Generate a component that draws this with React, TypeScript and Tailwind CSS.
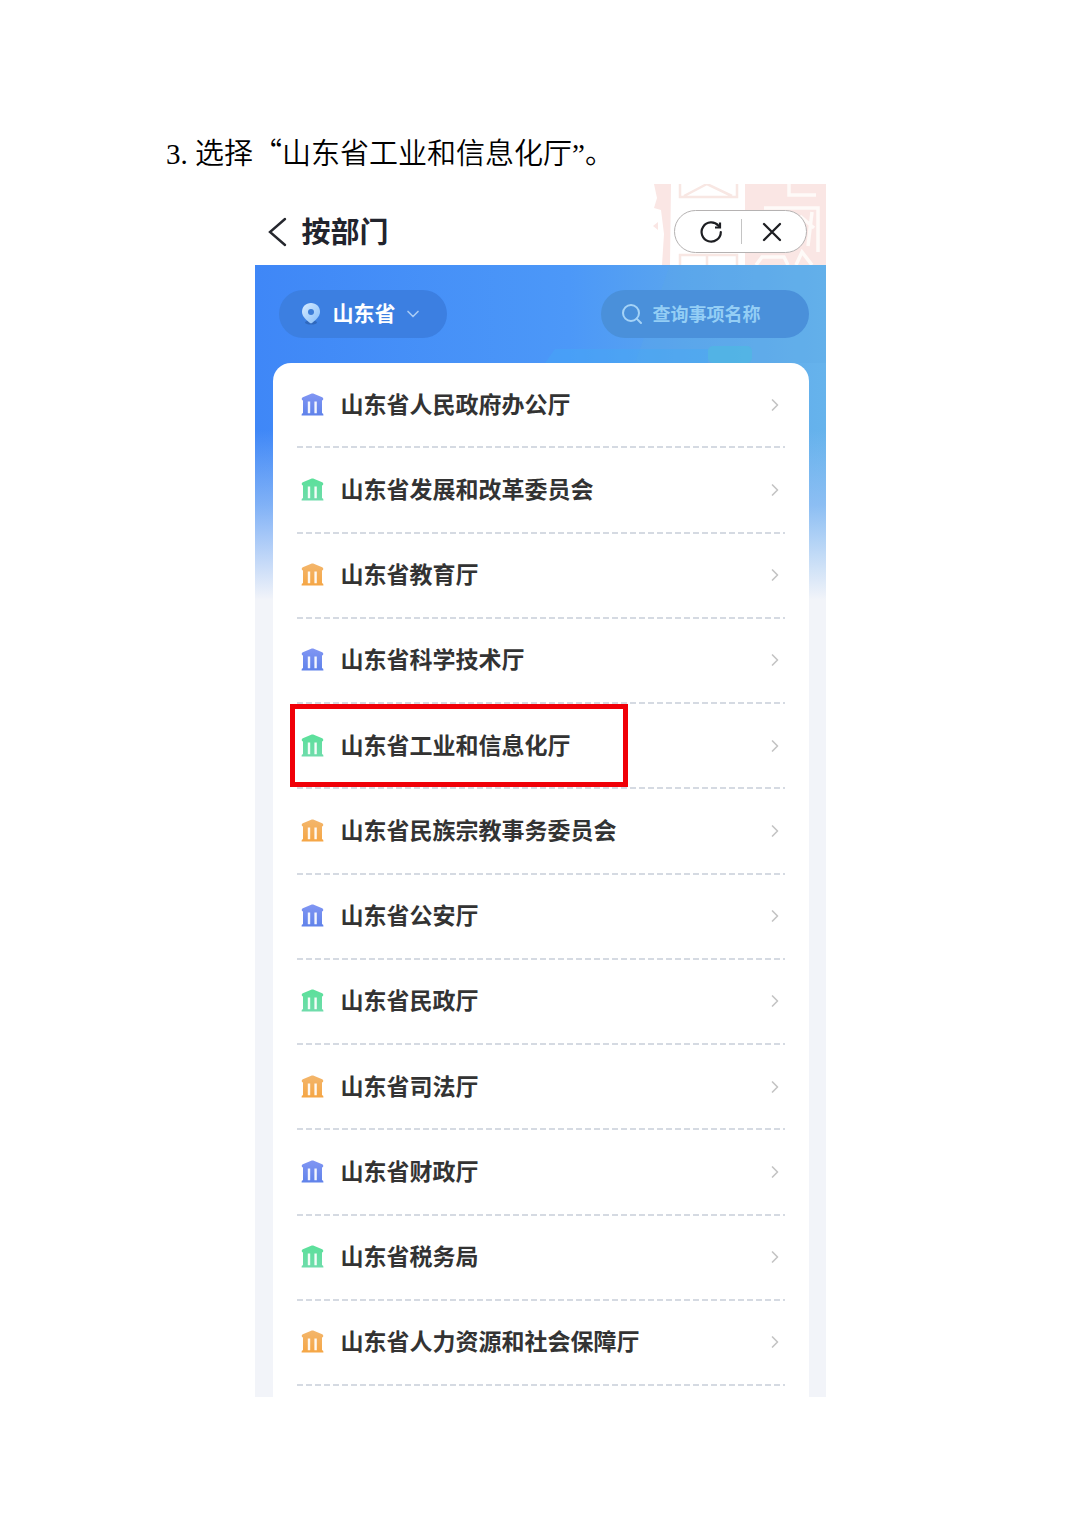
import { ChevronDown, ChevronRight, Search } from "lucide-react";

type Tone = "blue" | "green" | "orange";

const tones: Record<Tone, { from: string; to: string }> = {
  blue: { from: "#8196f3", to: "#5f82ea" },
  green: { from: "#5be09a", to: "#6fdcab" },
  orange: { from: "#f3b66c", to: "#f5a645" },
};

const toneOrder: Tone[] = ["blue", "green", "orange"];

const departments = [
  { id: "office", name: "山东省人民政府办公厅" },
  { id: "reform", name: "山东省发展和改革委员会" },
  { id: "education", name: "山东省教育厅" },
  { id: "science", name: "山东省科学技术厅" },
  { id: "industry", name: "山东省工业和信息化厅", marked: true },
  { id: "ethnic", name: "山东省民族宗教事务委员会" },
  { id: "police", name: "山东省公安厅" },
  { id: "civil", name: "山东省民政厅" },
  { id: "justice", name: "山东省司法厅" },
  { id: "finance", name: "山东省财政厅" },
  { id: "tax", name: "山东省税务局" },
  { id: "hr", name: "山东省人力资源和社会保障厅" },
];

function HallIcon({ tone }: { tone: Tone }) {
  const { from, to } = tones[tone];
  return (
    <svg viewBox="0 0 24 24" className="h-6 w-6 shrink-0" aria-hidden="true">
      <defs>
        <linearGradient id={`hall-${tone}`} x1="0" y1="0" x2="0" y2="1">
          <stop offset="0" stopColor={from} />
          <stop offset="1" stopColor={to} />
        </linearGradient>
      </defs>
      <path
        fill={`url(#hall-${tone})`}
        d="M10.800 .6Q11.500 .2 12.200 .6L21.200 4.200Q22.300 4.800 22.300 6Q22.300 7.400 21 7.500V20.300H21.400Q22.400 20.500 22.400 22V22.600H.6V22Q.6 20.500 1.600 20.300H2V7.500Q.7 7.400 .7 6Q.7 4.800 1.800 4.200Z"
      />
      <path fill="#fff" fillOpacity=".92" d="M6.800 8.500H9.200V20.300H6.800ZM13.400 8.500H15.800V20.300H13.400Z" />
    </svg>
  );
}

function PinIcon() {
  return (
    <svg viewBox="0 0 20 24" className="h-6 w-5 shrink-0" aria-hidden="true">
      <defs>
        <linearGradient id="pin" x1="0" y1="0" x2="1" y2="1">
          <stop offset="0" stopColor="#d9ecff" />
          <stop offset="1" stopColor="#84bdfa" />
        </linearGradient>
      </defs>
      <ellipse cx="10" cy="20.5" rx="6" ry="2" fill="#2f68bd" />
      <path fill="url(#pin)" d="M10 1C15.2 1 19 4.900 19 9.700C19 14.500 14.500 18.500 10 21.500C5.500 18.500 1 14.500 1 9.700C1 4.900 4.800 1 10 1Z" />
      <circle cx="10" cy="10" r="3" fill="#3c7dd8" />
    </svg>
  );
}

// Faded seal pattern behind the top right of the title bar
function SealPattern() {
  return (
    <svg viewBox="0 0 176 81" className="absolute top-0 right-0 h-[81px] w-[176px]" aria-hidden="true">
      <g fill="#fae6e4">
        <path d="M4 0H21L20 81H12L14 50L11 26L4 24L7 14Z" />
        <path d="M95 0H176V81H95Z" />
        <path d="M3 42L8 38V46Z" />
      </g>
      <g fill="none" stroke="#f8e7e3" strokeWidth="2.500">
        <path d="M30 0V13H87V0M34 12L57 0L82 12M30 81V71H87V81M57 71V81" />
      </g>
      <g fill="none" stroke="#fefaf8" strokeWidth="3.500">
        <path d="M139 0V11H166M114 24H168V68M150 32L164 44M162 28L158 62" />
        <path d="M106 81L112 73H134L138 81M146 81L152 68L162 81" />
      </g>
    </svg>
  );
}

function TitleBar() {
  return (
    <header className="relative flex items-center justify-between pt-[26px] pr-[19px] pb-3 pl-3">
      <SealPattern />
      <div className="flex items-center gap-[13px]">
        <button type="button" aria-label="返回">
          <svg viewBox="0 0 22 30" className="h-[30px] w-[22px]" fill="none" stroke="#25272e" strokeWidth="2.400" strokeLinecap="round">
            <path d="M18 2L3 15L18 28" />
          </svg>
        </button>
        <h1 className="pb-0.5 text-[29px] leading-[41px] font-bold text-[#22242d]">按部门</h1>
      </div>
      <div className="relative flex h-[43px] w-[133px] items-center rounded-full border border-[#b5b2b2] bg-white">
        <button type="button" aria-label="刷新" className="flex flex-1 justify-center pl-1.5">
          <svg viewBox="0 0 24 24" className="h-6 w-6" fill="none" stroke="#1d1e22" strokeWidth="2.200">
            <path d="M21.800 12A9.600 9.600 0 1 1 19.500 5.800" strokeLinecap="round" />
            <path d="M21 2.500V7.500H16" />
          </svg>
        </button>
        <span className="h-[25px] w-px bg-[#c4c4c4]" />
        <button type="button" aria-label="关闭" className="flex flex-1 justify-center pr-1">
          <svg viewBox="0 0 20 20" className="h-5 w-5" fill="none" stroke="#1d1e22" strokeWidth="2.300" strokeLinecap="round">
            <path d="M2 2L18 18M18 2L2 18" />
          </svg>
        </button>
      </div>
    </header>
  );
}

function FilterBar() {
  return (
    <div className="relative flex items-center justify-between pr-[17px] pl-6">
      <label className="flex h-12 w-[168px] items-center rounded-full bg-[#3c7fe1] pl-[22px]">
        <PinIcon />
        <select
          aria-label="地区"
          defaultValue="山东省"
          className="ml-3 w-[67px] appearance-none bg-transparent pb-1 text-[21px] leading-8 font-bold text-white outline-none"
        >
          <option>山东省</option>
        </select>
        <ChevronDown className="ml-[3px] h-5 w-5 text-[#a9cbf5]" />
      </label>
      <label className="flex h-12 w-[208px] items-center gap-[9px] rounded-full bg-[#4a90da] pr-4 pl-[19px]">
        <Search className="h-6 w-6 shrink-0 text-[#a5d3f7]" />
        <input
          type="search"
          aria-label="查询事项名称"
          placeholder="查询事项名称"
          className="w-full min-w-0 bg-transparent pb-0.5 text-lg font-bold text-white outline-none placeholder:text-[#94cef5]"
        />
      </label>
    </div>
  );
}

function DepartmentList() {
  return (
    <ul className="relative mr-[17px] ml-[18px] mt-[25px] grid min-h-[1034px] auto-rows-fr rounded-t-[18px] bg-white px-6 pb-[11px]">
      {departments.map((dept, i) => (
        <li key={dept.id} className="relative flex flex-col">
          <a href={`#${dept.id}`} className="flex flex-1 items-center pl-1">
            <HallIcon tone={toneOrder[i % 3]} />
            <span className="ml-4 flex-1 pb-1 text-[23px] leading-8 font-bold text-[#333]">{dept.name}</span>
            <ChevronRight className="h-5 w-5 text-[#c4c4c4]" />
          </a>
          <span className="h-[2px] bg-[repeating-linear-gradient(90deg,#d5dae2_0_6px,transparent_6px_9px)]" />
          {dept.marked && (
            <span className="pointer-events-none absolute top-0 bottom-0.5 -left-[7px] w-[338px] border-[5px] border-[#f00008]" />
          )}
        </li>
      ))}
    </ul>
  );
}

export default function App() {
  return (
    <main className="mx-auto min-h-screen max-w-[748px] bg-white pt-[131px] pb-[130px] font-['Noto_Sans_CJK_SC',sans-serif]">
      <p className="text-[29px] leading-10 font-[350] text-black font-['Liberation_Serif','Noto_Sans_CJK_SC',serif]">
        3. 选择<span className="font-['Noto_Sans_CJK_SC',sans-serif]">“</span>山东省工业和信息化厅”。
      </p>
      <div className="mx-auto mt-2.5 max-w-[571px]">
        <TitleBar />
        <section className="relative bg-[linear-gradient(180deg,transparent_165px,#9cc3f6b3_240px,#f2f4f9_335px),linear-gradient(90deg,#3f87f7,#4c98f8_55%,#5aa5ee_75%,#66b3ec)] pt-[25px]">
          <svg viewBox="0 0 571 98" className="absolute top-0 right-0 h-[98px] w-[571px]" aria-hidden="true">
            <path d="M415 0H571V98H380Z" fill="#5ca8e4" fillOpacity=".3" />
            <rect x="453" y="81" width="44" height="17" rx="5" fill="#4fb8e3" fillOpacity=".7" />
            <path d="M300 84H453V98H290Z" fill="#44a9f5" fillOpacity=".4" />
          </svg>
          <FilterBar />
          <DepartmentList />
        </section>
      </div>
    </main>
  );
}
